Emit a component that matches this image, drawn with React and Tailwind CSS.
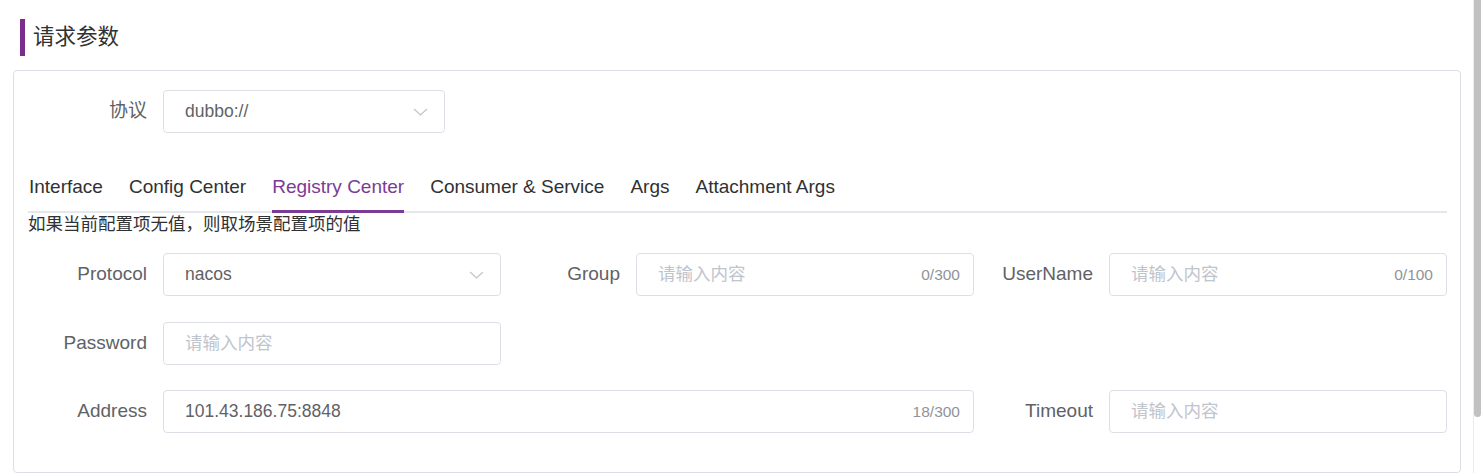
import React from "react";

const FONT = "font-['Liberation_Sans','Noto_Sans_CJK_SC',sans-serif]";

function Chevron() {
  return (
    <svg width="15" height="8" viewBox="0 0 15 8" fill="none">
      <path d="M1 1 L7.5 7 L14 1" stroke="#c0c4cc" strokeWidth="1.2" />
    </svg>
  );
}

function Select({ value, className = "" }) {
  return (
    <div
      className={`h-[43px] border border-[#dcdfe6] rounded-[4px] flex items-center justify-between pl-[21px] pr-[16px] bg-white ${className}`}
    >
      <span className="text-[17.5px] text-[#606266]">{value}</span>
      <Chevron />
    </div>
  );
}

function Input({ value, placeholder = "请输入内容", counter }) {
  return (
    <div className="flex-1 h-[43px] border border-[#dcdfe6] rounded-[4px] flex items-center justify-between pl-[21px] pr-[13px] bg-white">
      {value ? (
        <span className="text-[17.5px] text-[#606266]">{value}</span>
      ) : (
        <span className="text-[17.5px] text-[#c0c4cc]">{placeholder}</span>
      )}
      {counter && <span className="text-[15.5px] text-[#909399]">{counter}</span>}
    </div>
  );
}

function Field({ label, children, className = "" }) {
  return (
    <div className={`flex items-center ${className}`}>
      <div className="w-[135px] shrink-0 pr-4 text-right text-[19px] text-[#606266]">{label}</div>
      {children}
    </div>
  );
}

export default function App() {
  const tabs = ["Interface", "Config Center", "Registry Center", "Consumer & Service", "Args", "Attachment Args"];
  return (
    <div className={`flex w-full h-[473px] bg-white overflow-hidden ${FONT}`}>
      <div className="flex-1 pl-[13px] pr-[12px]">
        <div className="pt-[19px] pl-[7px] flex items-center">
          <div className="w-[5px] h-[37px] bg-[#7b2d8e]" />
          <div className="ml-[8px] text-[21.5px] text-[#303133] leading-none">请求参数</div>
        </div>

        <div className="mt-[14px] border border-[#dcdfe6] rounded-[4px] pl-[14px] pr-[13px] pt-[19px] pb-[39px]">
          <Field label="协议">
            <Select value="dubbo://" className="w-[282px]" />
          </Field>

          <div className="mt-[30px] flex gap-[26px] border-b-2 border-[#e4e7ed]">
            {tabs.map((t) => {
              const active = t === "Registry Center";
              return (
                <div
                  key={t}
                  className={`relative h-[48px] flex items-center text-[19px] ${
                    active ? "text-[#7b3b96]" : "text-[#303133]"
                  } ${t === "Interface" ? "pl-px" : ""}`}
                >
                  {t}
                  {active && <span className="absolute left-0 right-0 -bottom-[2px] h-[3px] bg-[#7b3b96]" />}
                </div>
              );
            })}
          </div>

          <div className="text-[17.5px] leading-[22px] text-[#303133]">如果当前配置项无值，则取场景配置项的值</div>

          <div className="mt-[18px] grid grid-cols-3 gap-y-[25.5px]">
            <Field label="Protocol">
              <Select value="nacos" className="flex-1" />
            </Field>
            <Field label="Group">
              <Input counter="0/300" />
            </Field>
            <Field label="UserName">
              <Input counter="0/100" />
            </Field>

            <Field label="Password">
              <Input />
            </Field>
            <div />
            <div />

            <Field label="Address" className="col-span-2">
              <Input value="101.43.186.75:8848" counter="18/300" />
            </Field>
            <Field label="Timeout">
              <Input />
            </Field>
          </div>
        </div>
      </div>

      <div className="w-[8px] shrink-0 border-l border-[#ececec] bg-white">
        <div className="h-[417px] bg-[#c1c1c1] rounded-b-[4px]" />
      </div>
    </div>
  );
}
